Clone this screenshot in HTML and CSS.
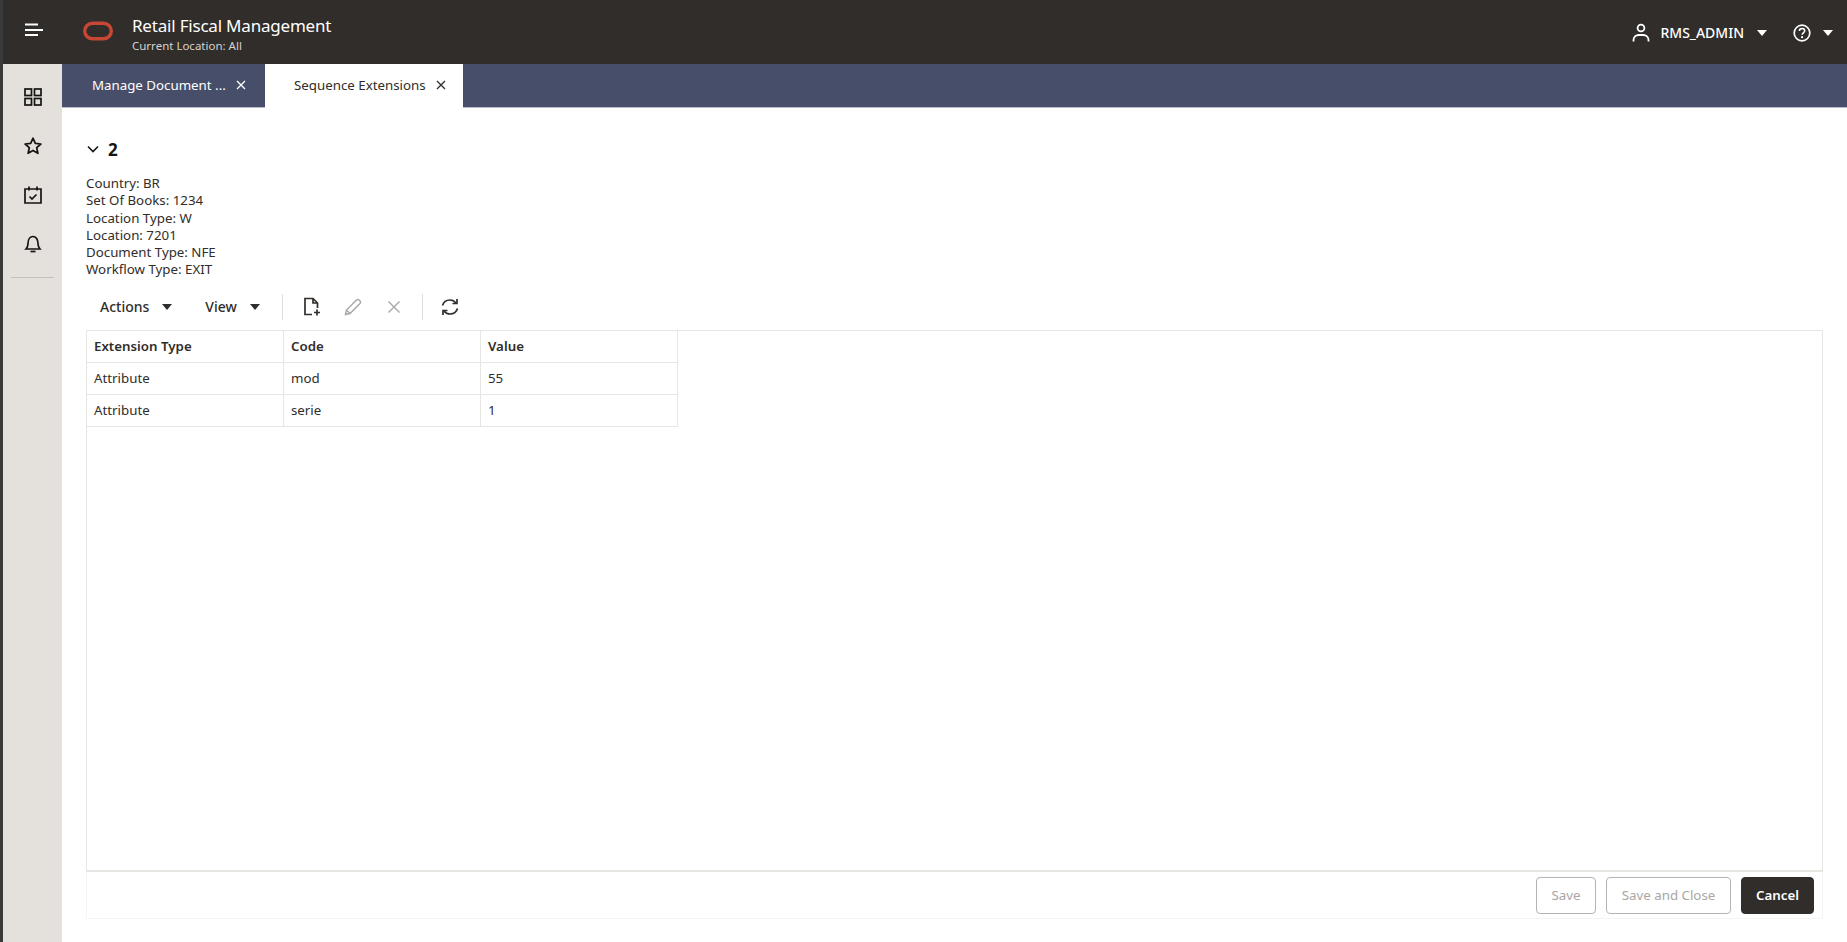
FILE: index.html
```html
<!DOCTYPE html>
<html lang="en">
<head>
<meta charset="utf-8">
<title>Retail Fiscal Management</title>
<link rel="stylesheet" href="styles.css">
</head>
<body>
<div class="app">
  <header class="header">
    <svg class="hamburger" width="20" height="14" viewBox="0 0 20 14"><path d="M1 1.500h13M1 7h18M1 12h13" stroke="#fff" stroke-width="2" fill="none"/></svg>
    <svg class="logo" width="30" height="20" viewBox="0 0 30 20"><rect x="1.700" y="2.200" width="26.600" height="15.600" rx="7.800" fill="none" stroke="#c74634" stroke-width="3.400"/></svg>
    <div class="brand">
      <div class="brand-title">Retail Fiscal Management</div>
      <div class="brand-sub">Current Location: All</div>
    </div>
    <div class="header-right">
      <svg class="user-icon" width="18" height="20" viewBox="0 0 18 20"><circle cx="9" cy="5" r="3.400" fill="none" stroke="#fff" stroke-width="1.800"/><path d="M1.500 18.500v-1.500c0-3 2.500-5 5-5h5c2.500 0 5 2 5 5v1.500" fill="none" stroke="#fff" stroke-width="1.800"/></svg>
      <span class="user-name">RMS_ADMIN</span>
      <span class="caret caret-light user-caret"></span>
      <svg class="help-icon" width="18" height="18" viewBox="0 0 18 18"><circle cx="9" cy="9" r="7.800" fill="none" stroke="#fff" stroke-width="1.700"/><path d="M6.400 7c0-1.600 1.200-2.500 2.700-2.500s2.600 1 2.600 2.300c0 2-2.600 2-2.600 4" fill="none" stroke="#fff" stroke-width="1.600"/><circle cx="9.100" cy="13.200" r="1.100" fill="#fff"/></svg>
      <span class="caret caret-light help-caret"></span>
    </div>
  </header>
  <div class="body-row">
    <nav class="sidebar">
      <svg class="side-icon" width="18" height="18" viewBox="0 0 18 18"><g fill="none" stroke="#161513" stroke-width="1.700"><rect x="1" y="1" width="6.500" height="6.500"/><rect x="10.500" y="1" width="6.500" height="6.500"/><rect x="1" y="10.500" width="6.500" height="6.500"/><rect x="10.500" y="10.500" width="6.500" height="6.500"/></g></svg>
      <svg class="side-icon" width="18" height="18" viewBox="0 0 18 18"><path d="M9 1.200l2.300 5.200 5.600.6-4.200 3.700 1.200 5.600L9 13.400l-4.900 2.900 1.200-5.600L1.100 7l5.600-.6z" fill="none" stroke="#161513" stroke-width="1.700" stroke-linejoin="round"/></svg>
      <svg class="side-icon" width="18" height="18" viewBox="0 0 18 18"><g fill="none" stroke="#161513" stroke-width="1.700"><path d="M1 3h16v14H1z"/><path d="M5 0.500v4M13 0.500v4"/><path d="M5.500 10.500l2.500 2.500 4.500-4.500"/></g></svg>
      <svg class="side-icon" width="18" height="18" viewBox="0 0 18 18"><g fill="none" stroke="#161513" stroke-width="1.700"><path d="M2 14h14c-1.500-1.500-2-2.500-2-5.500C14 4.500 12 1.500 9 1.500S4 4.500 4 8.500C4 11.500 3.500 12.500 2 14z"/><path d="M6.500 16.500h5"/></g></svg>
      <div class="side-rule"></div>
    </nav>
    <main class="main">
      <div class="tabs">
        <div class="tab tab-first"><span class="tab-label">Manage Document ...</span><svg class="tab-x" width="10" height="10" viewBox="0 0 10 10"><path d="M1 1l8 8M9 1l-8 8" stroke="#fff" stroke-width="1.300"/></svg></div>
        <div class="tab tab-active"><span class="tab-label">Sequence Extensions</span><svg class="tab-x" width="10" height="10" viewBox="0 0 10 10"><path d="M1 1l8 8M9 1l-8 8" stroke="#312d2a" stroke-width="1.300"/></svg></div>
      </div>
      <div class="content">
        <div class="section-head">
          <svg width="12" height="8" viewBox="0 0 12 8"><path d="M1 1.500l5 5 5-5" fill="none" stroke="#161513" stroke-width="1.600"/></svg>
          <span class="section-title">2</span>
        </div>
        <div class="meta">
          <div>Country: BR</div>
          <div>Set Of Books: 1234</div>
          <div>Location Type: W</div>
          <div>Location: 7201</div>
          <div>Document Type: NFE</div>
          <div>Workflow Type: EXIT</div>
        </div>
        <div class="toolbar">
          <div class="menu menu-actions">Actions<span class="caret caret-dark"></span></div>
          <div class="menu menu-view">View<span class="caret caret-dark"></span></div>
          <div class="tool-sep"></div>
          <svg class="tool tool-add" width="18" height="19" viewBox="0 0 18 19"><path d="M9 17.500H2V1.500h8l4.500 4.500v5M10 1.500V6h4.500" fill="none" stroke="#312d2a" stroke-width="1.700"/><path d="M11 15.500h6M14 12.500v6" stroke="#312d2a" stroke-width="1.700"/></svg>
          <svg class="tool tool-edit" width="18" height="18" viewBox="0 0 18 18"><path d="M1.500 16.500l1-4.500L12.500 2a1.800 1.800 0 0 1 2.500 0l1 1a1.800 1.800 0 0 1 0 2.500L6 15.500zM2.500 12l3.500 3.500" fill="none" stroke="#a9a7a4" stroke-width="1.400"/></svg>
          <svg class="tool tool-del" width="14" height="14" viewBox="0 0 14 14"><path d="M1.500 1.500l11 11M12.500 1.500l-11 11" stroke="#a9a7a4" stroke-width="1.400"/></svg>
          <div class="tool-sep tool-sep-2"></div>
          <svg class="tool tool-refresh" width="18" height="18" viewBox="0 0 18 18"><g fill="none" stroke="#312d2a" stroke-width="1.700"><path d="M1.500 7.500C2.500 4 5.500 2 9 2c2.500 0 4.500 1 6 3"/><path d="M16 1v4.500h-4.500"/><path d="M16.500 10.500C15.500 14 12.500 16 9 16c-2.500 0-4.500-1-6-3"/><path d="M2 17v-4.500h4.500"/></g></svg>
        </div>
        <div class="table-box">
          <div class="table-area">
            <div class="grid">
              <div class="cell head">Extension Type</div><div class="cell head">Code</div><div class="cell head">Value</div>
              <div class="cell">Attribute</div><div class="cell">mod</div><div class="cell">55</div>
              <div class="cell">Attribute</div><div class="cell">serie</div><div class="cell">1</div>
            </div>
          </div>
          <div class="footer">
            <button class="btn btn-off btn-save">Save</button>
            <button class="btn btn-off btn-close">Save and Close</button>
            <button class="btn btn-dark">Cancel</button>
          </div>
        </div>
      </div>
    </main>
  </div>
</div>
</body>
</html>
```
FILE: styles.css
```css
* { box-sizing: border-box; }
html, body { margin: 0; padding: 0; height: 100%; background: #fff; overflow: hidden; }
body { font-family: "Noto Sans", sans-serif; font-size: 13.300px; color: #312d2a; }

.app { height: 942px; display: flex; flex-direction: column; background: #fff; }

.header { height: 64px; flex: none; background: #312d2a; color: #fff; display: flex; align-items: center; border-left: 3px solid #3a3a3a; }
.hamburger { margin-left: 21px; margin-top: -4px; }
.logo { margin-left: 39px; margin-top: -2px; }
.brand { margin-left: 19px; margin-top: 3px; }
.brand-title { font-size: 17px; line-height: 24px; letter-spacing: -0.2px; }
.brand-sub { font-size: 11.500px; line-height: 16px; color: #d6d3cf; }
.header-right { margin-left: auto; margin-top: 1px; display: flex; align-items: center; padding-right: 14px; }
.user-name { font-size: 14px; font-weight: 500; margin-left: 10px; }
.user-caret { margin-left: 13px; }
.help-icon { margin-left: 26px; }
.help-caret { margin-left: 12px; }

.caret { display: inline-block; width: 0; height: 0; border-left: 5.500px solid transparent; border-right: 5.500px solid transparent; }
.caret-light { border-top: 6px solid #fff; }
.caret-dark { border-top: 6px solid #312d2a; margin-left: 13px; }

.body-row { flex: 1; display: flex; min-height: 0; }
.sidebar { width: 62px; flex: none; background: #e4e1dc; border-left: 3px solid #3a3a3a; display: flex; flex-direction: column; align-items: center; padding-top: 24px; }
.side-icon { margin-bottom: 31px; }
.side-rule { width: 43px; height: 1px; background: #c4c1bc; margin-top: -7px; }

.main { flex: 1; min-width: 0; display: flex; flex-direction: column; }
.tabs { height: 44px; flex: none; background: #474e6a; display: flex; border-bottom: 1px solid #b9bcc6; }
.tab { display: flex; align-items: center; height: 41px; padding-left: 30px; color: #fff; }
.tab-first { width: 203px; }
.tab-active { width: 198px; height: 44px; padding-bottom: 3px; margin-bottom: -1px; background: #fff; color: #312d2a; padding-left: 29px; }
.tab-x { margin-left: 10px; }

.content { flex: 1; min-height: 0; display: flex; flex-direction: column; padding: 30px 24px 23px 24px; }
.section-head { display: flex; align-items: center; height: 22px; margin-left: 1px; }
.section-title { font-size: 17px; font-weight: 700; color: #161513; margin-left: 9px; }
.meta { margin-top: 15px; line-height: 17.300px; }

.toolbar { display: flex; align-items: center; height: 36px; margin-top: 10px; flex: none; }
.menu { display: flex; align-items: center; font-size: 14px; color: #312d2a; font-weight: 500; }
.menu-actions { margin-left: 14px; }
.menu-view { margin-left: 33px; }
.tool-sep { width: 1px; height: 26px; background: #e0dedb; margin-left: 22px; }
.tool-add { margin-left: 20px; }
.tool-edit { margin-left: 23px; }
.tool-del { margin-left: 25px; }
.tool-sep-2 { margin-left: 21px; }
.tool-refresh { margin-left: 18px; }

.table-box { flex: 1; min-height: 0; margin-top: 5px; display: flex; flex-direction: column; }
.table-area { flex: 1; min-height: 0; border: 1px solid #e8e6e3; border-bottom: 2px solid #e8e6e3; }
.grid { display: grid; grid-template-columns: repeat(3, 197px); grid-auto-rows: 32px; width: max-content; margin-top: -1px; margin-left: -1px; }
.cell { display: flex; align-items: center; padding-left: 7px; border: 1px solid #e8e6e3; margin-right: -1px; margin-bottom: -1px; }
.cell.head { font-weight: 600; }

.footer { height: 47px; flex: none; display: flex; justify-content: flex-end; align-items: center; gap: 10px; padding-right: 8px; border: 1px solid #f5f4f2; border-top: 0; }
.btn { height: 37px; font-family: inherit; font-size: 13.300px; border-radius: 4px; padding: 0; }
.btn-off { background: #fff; border: 1px solid #b5b3b0; color: #a9a7a4; }
.btn-save { width: 60px; }
.btn-close { width: 125px; }
.btn-dark { width: 73px; background: #312d2a; border: 1px solid #312d2a; color: #fff; font-weight: 600; }
```
